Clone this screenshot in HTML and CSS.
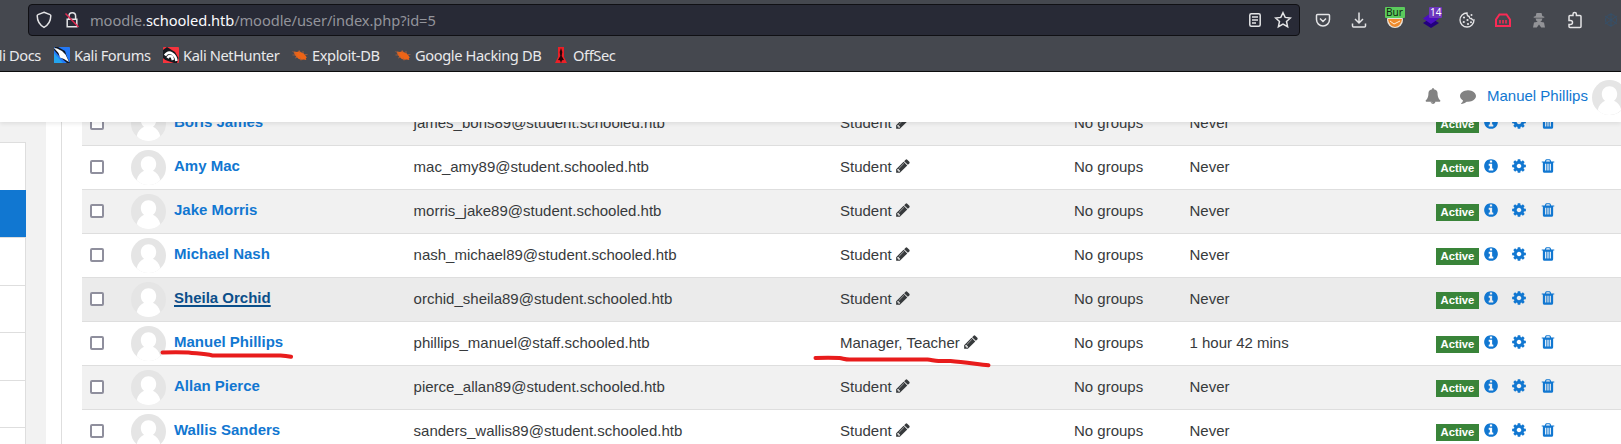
FILE: index.html
```html
<!DOCTYPE html>
<html lang="en">
<head>
<meta charset="utf-8">
<title>Participants</title>
<link rel="stylesheet" href="styles.css">
</head>
<body>
<svg class="defs" width="0" height="0">
<symbol id="info" viewBox="0 0 1792 1792"><path d="M1152 1376v-160q0-14-9-23t-23-9h-96v-512q0-14-9-23t-23-9h-320q-14 0-23 9t-9 23v160q0 14 9 23t23 9h96v320h-96q-14 0-23 9t-9 23v160q0 14 9 23t23 9h448q14 0 23-9t9-23zm-128-896v-160q0-14-9-23t-23-9h-192q-14 0-23 9t-9 23v160q0 14 9 23t23 9h192q14 0 23-9t9-23zm640 416q0 209-103 385.5t-279.5 279.5-385.5 103-385.5-103-279.5-279.5-103-385.5 103-385.5 279.5-279.5 385.5-103 385.5 103 279.5 279.5 103 385.5z"/></symbol>
<symbol id="cog" viewBox="0 0 1792 1792"><path d="M1152 896q0-106-75-181t-181-75-181 75-75 181 75 181 181 75 181-75 75-181zm512-109v222q0 12-8 23t-20 13l-185 28q-19 54-39 91 35 50 107 138 10 12 10 25t-9 23q-27 37-99 108t-94 71q-12 0-26-9l-138-108q-44 23-91 38-16 136-29 186-7 28-36 28h-222q-14 0-24.5-8.5t-11.5-21.5l-28-184q-49-16-90-37l-141 107q-10 9-25 9-14 0-25-11-126-114-165-168-7-10-7-23 0-12 8-23 15-21 51-66.5t54-70.5q-27-50-41-99l-183-27q-13-2-21-12.5t-8-23.5v-222q0-12 8-23t19-13l186-28q14-46 39-92-40-57-107-138-10-12-10-24 0-10 9-23 26-36 98.5-107.5t94.5-71.5q13 0 26 10l138 107q44-23 91-38 16-136 29-186 7-28 36-28h222q14 0 24.5 8.5t11.5 21.5l28 184q49 16 90 37l142-107q9-9 24-9 13 0 25 10 129 119 165 170 7 8 7 22 0 12-8 23-15 21-51 66.5t-54 70.5q26 50 41 98l183 28q13 2 21 12.5t8 23.5z"/></symbol>
<symbol id="trash" viewBox="0 0 1792 1792"><path fill-rule="evenodd" d="M704 1376v-704q0-14-9-23t-23-9h-64q-14 0-23 9t-9 23v704q0 14 9 23t23 9h64q14 0 23-9t9-23zm256 0v-704q0-14-9-23t-23-9h-64q-14 0-23 9t-9 23v704q0 14 9 23t23 9h64q14 0 23-9t9-23zm256 0v-704q0-14-9-23t-23-9h-64q-14 0-23 9t-9 23v704q0 14 9 23t23 9h64q14 0 23-9t9-23zm-544-992h448l-48-117q-7-9-17-11h-317q-10 2-17 11zm928 32v64q0 14-9 23t-23 9h-96v948q0 83-47 143.5t-113 60.5h-832q-66 0-113-58.5t-47-141.5v-952h-96q-14 0-23-9t-9-23v-64q0-14 9-23t23-9h309l70-167q15-37 54-63t79-26h320q40 0 79 26t54 63l70 167h309q14 0 23 9t9 23z"/></symbol>
<symbol id="pencil" viewBox="0 0 1792 1792"><path d="M491 1536l91-91-235-235-91 91v107h128v128h107zm523-928q0-22-22-22-10 0-17 7l-542 542q-7 7-7 17 0 22 22 22 10 0 17-7l542-542q7-7 7-17zm-54-192l416 416-832 832h-416v-416zm683 96q0 53-37 90l-166 166-416-416 166-165q36-38 90-38 53 0 91 38l235 234q37 39 37 91z"/></symbol>
<symbol id="avatar" viewBox="0 0 35 35"><circle cx="17.500" cy="17.500" r="17.500" fill="#e5e5e5"/><path fill="#fff" d="M17.500 6.200c4.300 0 7.700 3.300 7.700 7.800 0 2.900-1.200 5.300-3.200 6.800 3.400 1.400 6.200 4.600 7.300 9.200C26.500 33.300 22.200 35 17.500 35S8.500 33.300 5.700 30c1.100-4.600 3.900-7.800 7.300-9.200-2-1.500-3.200-3.900-3.200-6.800 0-4.500 3.400-7.800 7.700-7.800z"/></symbol>
<symbol id="bug" viewBox="0 0 16 16"><path fill="#ee6416" d="M2 4.500l3 .5 2.500-1 1.500 1.200 2.500 1 2 2.300 1.300 2-1 .8.500 1.700-2.500-.5-2 .3-3-.8-2.500-2.200-1.500-2-.8-2z"/><path stroke="#b5623a" stroke-width=".7" fill="none" d="M.5 4.500l4 2M.5 8h4M3 11l3-1M7 3l1 3M11 4v3M9 13.500l-1-3M13 7.500h2.500"/></symbol>
</svg>

<header class="browser">
  <div class="toolbar">
    <div class="urlbar">
      <svg class="i-shield" width="16" height="18" viewBox="0 0 16 18"><path d="M8 1.300l6 2.300c.6.200.8.600.8 1.200C14.700 10 12.500 14 8 16.300 3.500 14 1.300 10 1.200 4.800c0-.6.200-1 .8-1.200z"/></svg>
      <svg class="i-lock" width="16" height="18" viewBox="0 0 16 18"><path d="M5 8V5a3.300 3.300 0 0 1 6.600 0v3M3.200 8.200h9.600v7.500H3.200z"/><path class="slash" d="M1.500 2.500l13 13.500"/></svg>
      <span class="url">moodle.<b>schooled.htb</b>/moodle/user/index.php?id=5</span>
      <svg class="i-reader" width="14" height="16" viewBox="0 0 14 16"><rect x="1.800" y="1.800" width="10.400" height="12.400" rx="1.500"/><path d="M4 5h6M4 8h6M4 11h4"/></svg>
      <svg class="i-star" width="18" height="18" viewBox="0 0 18 18"><path d="M9 1.700l2.200 4.700 5.200.6-3.900 3.500 1.100 5.200L9 13.100l-4.600 2.600 1.100-5.200L1.600 7l5.200-.6z"/></svg>
    </div>
    <div class="extensions">
      <svg width="16" height="16" viewBox="0 0 16 16"><path d="M2.500 2.500h11q1 0 1 1V7.500a6.500 6.500 0 0 1-13 0v-4q0-1 1-1zM5 6.500l3 3 3-3"/></svg>
      <svg width="16" height="18" viewBox="0 0 16 18"><path d="M8 1.500v10M4 8l4 4 4-4M1.500 12.500v2.500q0 1 1 1h11q1 0 1-1v-2.500"/></svg>
      <span class="ext"><svg width="18" height="18" viewBox="0 0 18 18"><circle cx="9" cy="9" r="8" fill="#e8e2d8" stroke="none"/><path fill="#ef8a2c" stroke="none" d="M2 8h14q-1 7-7 8-6-1-7-8z"/><path d="M4 10l4 3 6-3" stroke="#fff0d8" stroke-width="1"/></svg><i class="badge green">Bur</i></span>
      <span class="ext"><svg width="18" height="18" viewBox="0 0 18 18"><path fill="#23007e" stroke="none" d="M9 7l8 5-8 5-8-5z"/><path fill="#4b0fc0" stroke="none" d="M9 2l8 5.500L9 13 1 7.500z"/></svg><i class="badge violet">14</i></span>
      <svg width="16" height="16" viewBox="0 0 16 16"><path stroke-width="1.300" d="M8 1a7 7 0 1 0 7 7q-2 .3-2.500-1.500-2 .3-2.300-2Q7.700 4 8 1z"/><g fill="#e4e4e6" stroke="none"><circle cx="5" cy="5.500" r="1.100"/><circle cx="4.800" cy="10" r="1.100"/><circle cx="8.500" cy="8" r="1.100"/><circle cx="9" cy="12" r="1.100"/><circle cx="12" cy="10.200" r="1"/><circle cx="12.500" cy="3" r="1"/></g></svg>
      <svg class="red" width="16" height="16" viewBox="0 0 16 16"><path d="M1 14V7.500L4.500 2.500h7L15 7.500V14z"/><path stroke-width="1.500" d="M5 8v3.500M8 8v3.500M11 8v3.500"/></svg>
      <svg width="14" height="16" viewBox="0 0 14 16"><path fill="#929397" stroke="none" d="M4.500 1h5l.8 3 2 .8v1H1.700v-1l2-.8zM3.500 6.500h7L9.500 9l-1.300.8 3.800.8 1 4.900H9.200L7 12.500 4.800 15.500H1l1-4.900 3.800-.8L4.500 9z"/></svg>
      <svg width="16" height="18" viewBox="0 0 16 18"><path d="M2 7.500v-2q0-1 1-1h3V3.300a1.700 1.700 0 0 1 3.400 0v1.200h3.600q1 0 1 1v10q0 1-1 1H3q-1 0-1-1v-2h1.500a1.900 1.900 0 0 0 0-4H2z"/></svg>
      <svg class="faint" width="16" height="16" viewBox="0 0 16 16"><circle cx="8" cy="8" r="5.500"/><path d="M8 1v14M2 4l12 8M2 12l12-8"/></svg>
    </div>
  </div>
  <nav class="bookmarks">
    <span class="cut">Kali Docs</span>
    <span><svg width="16" height="16" viewBox="0 0 16 16"><rect width="16" height="16" rx="1" fill="#2478f5"/><path fill="#23a4ef" d="M0 6l9 10H0z"/><path fill="#101826" d="M1 0h3l7 4 2 6 3 6h-3L6 10 0 3z"/><path fill="#fff" d="M0 1l3 .5 5 2.500 3.500 3.500L15 15l-5-3-4-1.500L4.500 6z"/></svg>Kali Forums</span>
    <span><svg width="16" height="16" viewBox="0 0 16 16"><rect width="16" height="16" rx="1" fill="#f6333d"/><path fill="#16191f" d="M0 3l4-3 8 5 3.500 6-1.500 5h-3L5 14 0 12z"/><path fill="none" stroke="#fff" stroke-width="2.600" d="M2 8.500Q5 4 9 6.500T13.500 14M4.500 11q2-3.500 4.500-1l1 3"/><path fill="#f6333d" d="M0 11l5 5H0z"/></svg>Kali NetHunter</span>
    <span><svg width="16" height="16"><use href="#bug"/></svg>Exploit-DB</span>
    <span><svg width="16" height="16"><use href="#bug"/></svg>Google Hacking DB</span>
    <span><svg width="16" height="16" viewBox="0 0 16 16"><path fill="#eb2027" d="M5 0h6v10l3 6H2l3-6z"/><path fill="#240508" d="M8 1l1.300 4L8.700 9l2.300 4-2 .3L8 16l-1-2.700-2-.3L7.300 9l-.6-4z"/></svg>OffSec</span>
  </nav>
</header>

<div class="page">
  <div class="navbar">
    <svg class="ico" viewBox="0 0 1792 1792"><path d="M912 1696q0-16-16-16-59 0-101.500-42.500t-42.500-101.500q0-16-16-16t-16 16q0 73 51.500 124.500t124.500 51.500q16 0 16-16zm816-288q0 52-38 90t-90 38h-448q0 106-75 181t-181 75-181-75-75-181h-448q-52 0-90-38t-38-90q50-42 91-88t85-119.500 74.500-158.500 50-206 19.500-260q0-152 117-282.500t307-158.500q-8-19-8-39 0-40 28-68t68-28 68 28 28 68q0 20-8 39 190 28 307 158.500t117 282.500q0 139 19.500 260t50 206 74.500 158.500 85 119.500 91 88z"/></svg>
    <svg class="ico" viewBox="0 0 1792 1792"><path d="M1792 896q0 174-120 321.500t-326 233-450 85.500q-70 0-145-8-198 175-460 242-49 14-114 22-17 2-30.500-9t-17.500-29v-1q-3-4-.5-12t2-10 4.500-9.500l6-9 7-8.500 8-9q7-8 31-34.500t34.500-38 31-39.500 32.500-51 27-59 26-76q-157-89-247.500-220t-90.500-281q0-130 71-248.500t191-204.500 286-136.500 348-50.500q244 0 450 85.500t326 233 120 321.500z"/></svg>
    <a class="user">Manuel Phillips</a>
    <svg class="avatar"><use href="#avatar"/></svg>
  </div>
  <div class="content">
    <aside class="drawer">
      <div class="item first"></div><div class="item active"></div><div class="item"></div><div class="item short"></div><div class="item"></div><div class="item short"></div><div class="item"></div>
    </aside>
    <main class="card">
      <div class="row odd"><i class="check"></i><svg class="avatar"><use href="#avatar"/></svg><a class="name">Boris James</a><span>james_boris89@student.schooled.htb</span><span class="role">Student<svg class="ico"><use href="#pencil"/></svg></span><span>No groups</span><span>Never</span><span class="status"><b class="tag">Active</b><svg class="ico"><use href="#info"/></svg><svg class="ico"><use href="#cog"/></svg><svg class="ico"><use href="#trash"/></svg></span></div>
      <div class="row"><i class="check"></i><svg class="avatar"><use href="#avatar"/></svg><a class="name">Amy Mac</a><span>mac_amy89@student.schooled.htb</span><span class="role">Student<svg class="ico"><use href="#pencil"/></svg></span><span>No groups</span><span>Never</span><span class="status"><b class="tag">Active</b><svg class="ico"><use href="#info"/></svg><svg class="ico"><use href="#cog"/></svg><svg class="ico"><use href="#trash"/></svg></span></div>
      <div class="row odd"><i class="check"></i><svg class="avatar"><use href="#avatar"/></svg><a class="name">Jake Morris</a><span>morris_jake89@student.schooled.htb</span><span class="role">Student<svg class="ico"><use href="#pencil"/></svg></span><span>No groups</span><span>Never</span><span class="status"><b class="tag">Active</b><svg class="ico"><use href="#info"/></svg><svg class="ico"><use href="#cog"/></svg><svg class="ico"><use href="#trash"/></svg></span></div>
      <div class="row"><i class="check"></i><svg class="avatar"><use href="#avatar"/></svg><a class="name">Michael Nash</a><span>nash_michael89@student.schooled.htb</span><span class="role">Student<svg class="ico"><use href="#pencil"/></svg></span><span>No groups</span><span>Never</span><span class="status"><b class="tag">Active</b><svg class="ico"><use href="#info"/></svg><svg class="ico"><use href="#cog"/></svg><svg class="ico"><use href="#trash"/></svg></span></div>
      <div class="row hover"><i class="check"></i><svg class="avatar"><use href="#avatar"/></svg><a class="name">Sheila Orchid</a><span>orchid_sheila89@student.schooled.htb</span><span class="role">Student<svg class="ico"><use href="#pencil"/></svg></span><span>No groups</span><span>Never</span><span class="status"><b class="tag">Active</b><svg class="ico"><use href="#info"/></svg><svg class="ico"><use href="#cog"/></svg><svg class="ico"><use href="#trash"/></svg></span></div>
      <div class="row"><i class="check"></i><svg class="avatar"><use href="#avatar"/></svg><a class="name">Manuel Phillips</a><span>phillips_manuel@staff.schooled.htb</span><span class="role">Manager, Teacher<svg class="ico"><use href="#pencil"/></svg></span><span>No groups</span><span>1 hour 42 mins</span><span class="status"><b class="tag">Active</b><svg class="ico"><use href="#info"/></svg><svg class="ico"><use href="#cog"/></svg><svg class="ico"><use href="#trash"/></svg></span></div>
      <div class="row odd"><i class="check"></i><svg class="avatar"><use href="#avatar"/></svg><a class="name">Allan Pierce</a><span>pierce_allan89@student.schooled.htb</span><span class="role">Student<svg class="ico"><use href="#pencil"/></svg></span><span>No groups</span><span>Never</span><span class="status"><b class="tag">Active</b><svg class="ico"><use href="#info"/></svg><svg class="ico"><use href="#cog"/></svg><svg class="ico"><use href="#trash"/></svg></span></div>
      <div class="row"><i class="check"></i><svg class="avatar"><use href="#avatar"/></svg><a class="name">Wallis Sanders</a><span>sanders_wallis89@student.schooled.htb</span><span class="role">Student<svg class="ico"><use href="#pencil"/></svg></span><span>No groups</span><span>Never</span><span class="status"><b class="tag">Active</b><svg class="ico"><use href="#info"/></svg><svg class="ico"><use href="#cog"/></svg><svg class="ico"><use href="#trash"/></svg></span></div>
    </main>
  </div>
</div>
<svg class="marks" viewBox="0 0 1621 444"><path d="M162.500 352.500c9-.4 18-.4 26 0 8 1 16 1.300 24 3h68c4 .2 7 .6 10.500 1.300"/><path d="M815.500 358c9-.5 18-.4 24 0 4 .6 6 1.500 10 1.500h78c4 .3 7 1.500 11 1.500h12c12 1 24 2.700 38 4.300"/></svg>
</body>
</html>
```
FILE: styles.css
```css
* { box-sizing: border-box; }
body { margin: 0; width: 1621px; height: 444px; overflow: hidden; background: #fff; font: 15px/22px "Liberation Sans", Arial, sans-serif; color: #373a3c; }
svg { display: block; flex: none; }
.defs { position: absolute; }

.browser { height: 72px; background: #45484f; border-bottom: 1px solid #0c0c0d; font-family: "Noto Sans", sans-serif; }
.toolbar { display: flex; padding: 4px 0 0 28px; height: 36px; }
.urlbar { display: flex; flex: none; align-items: center; width: 1272px; height: 32px; padding: 0 7px; background: #282a36; border: 1px solid #101014; border-radius: 4px; fill: none; stroke: #e4e4e6; stroke-width: 1.5; }
.i-lock { margin-left: 12px; }
.slash { stroke: #e22850; }
.url { flex: 1; margin-left: 10px; font-size: 14.67px; letter-spacing: -.08px; color: #93949b; white-space: nowrap; }
.url b { font-weight: 400; color: #fbfbfe; }
.i-star { margin: 0 0 0 12px; }
.extensions { display: grid; flex: none; grid-template-columns: repeat(9, 36px); align-items: center; justify-items: center; margin-left: 5px; fill: none; stroke: #e4e4e6; stroke-width: 1.5; }
.ext { position: relative; }
.badge { position: absolute; left: 0; top: -4px; padding: 0 1px; font-style: normal; font-size: 10px; line-height: 11px; border-radius: 1px; }
.green { width: 20px; left: -1px; background: #5bcb5c; color: #10250f; }
.violet { left: 7px; background: #6d37bd; color: #fff; }
.red { stroke: #fb2a55; stroke-width: 2; }
.faint { stroke: #35506a; stroke-width: 1; }
.bookmarks { display: grid; grid-template-columns: 54px 109px 129px 103px 158px auto; height: 35px; padding-top: 3px; align-items: center; font-size: 14.67px; letter-spacing: -.4px; color: #e9e9eb; }
.bookmarks span { display: flex; align-items: center; gap: 4px; height: 32px; padding-bottom: 1px; white-space: nowrap; }
.bookmarks .cut { justify-content: flex-end; padding-right: 13px; overflow: hidden; }

.page { height: 372px; overflow: hidden; }
.navbar { position: relative; z-index: 1; display: flex; align-items: center; height: 50px; padding-left: 1425px; background: #fff; box-shadow: 0 2px 4px rgba(0,0,0,.08); }
.navbar .ico { fill: #828282; margin: 0 19px 2px 0; }
.navbar .ico + .ico { margin-right: 11px; }
.navbar .avatar { margin-top: 1px; }
.user { flex: none; width: 105px; margin-bottom: 2px; color: #1177d1; white-space: nowrap; }
.ico { width: 16px; height: 16px; fill: #373a3c; }
.avatar { width: 35px; height: 35px; }
.content { display: flex; height: 322px; }
.drawer { width: 46px; padding-top: 20px; background: #f2f2f2; }
.item { width: 26px; height: 48px; background: #fff; border-top: 1px solid #dedede; border-right: 1px solid #dedede; }
.item.active { height: 47px; background: #1177d1; border-color: #1177d1; }
.item.short { height: 47px; }
.card { flex: 1; margin: -21px 0 0 15px; padding-left: 20px; border-left: 1px solid #dedede; }
.row { display: grid; grid-template-columns: 41px 43px 239.6px 426.4px 234px 115.5px 246.500px auto; align-items: center; height: 44px; padding: 0 0 2px 8px; border-top: 1px solid #dedede; white-space: nowrap; }
.row .avatar { margin-top: 2px; }
.odd { background: #f1f1f1; }
.hover { background: #ebebeb; }
.check { width: 14px; height: 14px; margin-top: 1px; background: #fff; border: 2px solid #8f8f9d; border-radius: 2px; }
.name { font-weight: 700; color: #1177d1; margin-bottom: 2px; }
.hover .name { color: #0b4f8a; text-decoration: underline 2px; text-underline-offset: 2px; }
.role { display: flex; align-items: center; gap: 3.5px; }
.role .ico { margin-bottom: 1px; }
.status { display: flex; align-items: center; }
.status .ico { fill: #1177d1; margin: 0 8.5px 2px 4px; }
.tag { width: 43px; height: 17px; margin-top: 3px; background: #398439; color: #fff; font-size: 11.25px; line-height: 17px; text-align: center; }

.marks { position: absolute; left: 0; top: 0; z-index: 2; width: 1621px; height: 444px; fill: none; stroke: #e81c1c; stroke-width: 4; stroke-linecap: round; }
```
